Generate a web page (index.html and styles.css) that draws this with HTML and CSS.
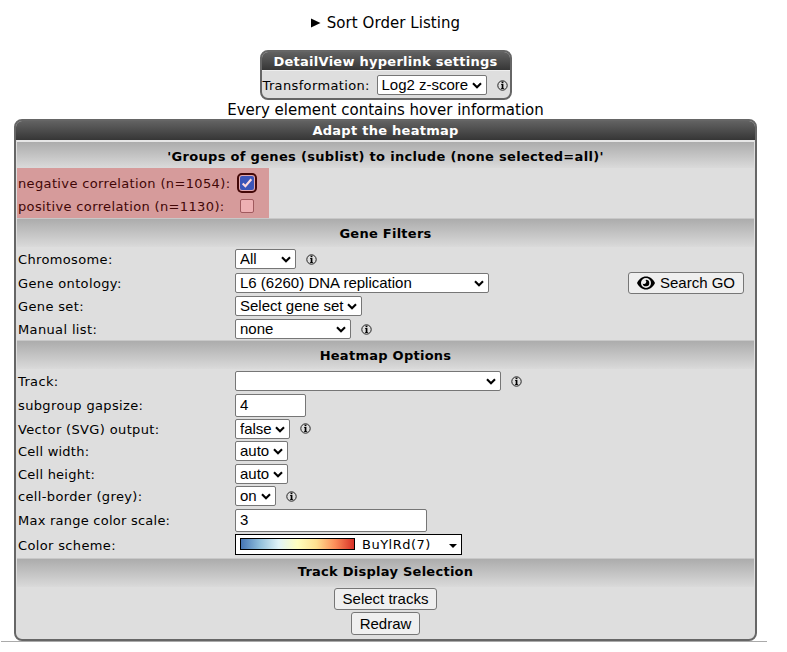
FILE: index.html
```html
<!DOCTYPE html>
<html lang="en">
<head>
<meta charset="utf-8">
<title>Heatmap settings</title>
<link rel="stylesheet" href="styles.css">
</head>
<body>
<svg class="defs" width="0" height="0">
  <symbol id="chev" viewBox="0 0 10 7"><path d="M1 1.2 5 5.2 9 1.2" fill="none" stroke="#000" stroke-width="2.1"/></symbol>
  <symbol id="info" viewBox="0 0 11 11"><circle cx="5.5" cy="5.5" r="4.7" fill="none" stroke="#222" stroke-width="1"/><path d="M4 4h2.4v4.2H7.2V9H3.9V8.2h.8V4.8H4z"/><path d="M4.6 1.6h1.8v1.6H4.6z"/></symbol>
</svg>
<main class="page">
  <div class="listing"><svg width="10" height="10" viewBox="0 0 10 10"><path d="M0 .5 9.5 5 0 9.5z"/></svg><span class="listing-text">Sort Order Listing</span></div>

  <section class="box detail">
    <h2 class="bar"><span class="t-detail">DetailView hyperlink settings</span></h2>
    <div class="detail-row">
      <label class="t-trans">Transformation:</label>
      <span class="select w-log"><select><option>Log2 z-score</option></select><svg class="chev"><use href="#chev"/></svg></span>
      <svg class="info"><use href="#info"/></svg>
    </div>
  </section>

  <p class="hover-note">Every element contains hover information</p>

  <section class="box panel">
    <h2 class="bar"><span class="t-adapt">Adapt the heatmap</span></h2>
    <h3 class="sub first"><span class="t-groups">'Groups of genes (sublist) to include (none selected=all)'</span></h3>
    <div class="groups">
      <div class="pick p1"><label class="t-neg">negative correlation (n=1054):</label><span class="check on"><svg width="14" height="14" viewBox="0 0 13 13"><path d="M2.5 7 5 9.5 10.5 3" fill="none" stroke="#ffd9dd" stroke-width="2"/></svg></span></div>
      <div class="pick p2"><label class="t-pos">positive correlation (n=1130):</label><span class="check"></span></div>
    </div>
    <h3 class="sub"><span class="t-filters">Gene Filters</span></h3>
    <div class="rows filters">
      <div class="row"><label>Chromosome:</label><span class="select w-all"><select><option>All</option></select><svg class="chev"><use href="#chev"/></svg></span><svg class="info"><use href="#info"/></svg></div>
      <div class="row"><label>Gene ontology:</label><span class="select w-go"><select><option>L6 (6260) DNA replication</option></select><svg class="chev"><use href="#chev"/></svg></span>
        <button class="btn search"><svg width="18" height="14" viewBox="0 0 18 14"><path fill-rule="evenodd" d="M0 7C2 3 5 .5 9 .5S16 3 18 7c-2 4-5 6.5-9 6.5S2 11 0 7zM9 2a5 5 0 1 0 0 10A5 5 0 0 0 9 2z"/><path d="M9 3.7A3.3 3.3 0 1 1 5.7 7.4 2 2 0 0 0 8.6 4.3z"/></svg>Search GO</button></div>
      <div class="row"><label>Gene set:</label><span class="select w-set"><select><option>Select gene set</option></select><svg class="chev"><use href="#chev"/></svg></span></div>
      <div class="row"><label>Manual list:</label><span class="select w-none"><select><option>none</option></select><svg class="chev"><use href="#chev"/></svg></span><svg class="info"><use href="#info"/></svg></div>
    </div>
    <h3 class="sub"><span class="t-options">Heatmap Options</span></h3>
    <div class="rows options">
      <div class="row"><label>Track:</label><span class="select w-track"><select><option></option></select><svg class="chev"><use href="#chev"/></svg></span><svg class="info"><use href="#info"/></svg></div>
      <div class="row"><label>subgroup gapsize:</label><input class="w-gap" value="4"></div>
      <div class="row"><label>Vector (SVG) output:</label><span class="select w-false"><select><option>false</option></select><svg class="chev"><use href="#chev"/></svg></span><svg class="info"><use href="#info"/></svg></div>
      <div class="row"><label class="tight">Cell width:</label><span class="select w-auto"><select><option>auto</option></select><svg class="chev"><use href="#chev"/></svg></span></div>
      <div class="row"><label class="tight">Cell height:</label><span class="select w-auto"><select><option>auto</option></select><svg class="chev"><use href="#chev"/></svg></span></div>
      <div class="row"><label>cell-border (grey):</label><span class="select w-on"><select><option>on</option></select><svg class="chev"><use href="#chev"/></svg></span><svg class="info"><use href="#info"/></svg></div>
      <div class="row"><label class="tight">Max range color scale:</label><input class="w-range" value="3"></div>
      <div class="row scheme-row"><label>Color scheme:</label><span class="scheme"><i class="ramp"></i><span class="scheme-name">BuYlRd(7)</span><i class="caret"></i></span></div>
    </div>
    <h3 class="sub last"><span class="t-track">Track Display Selection</span></h3>
    <div class="actions"><button class="btn w-select">Select tracks</button><button class="btn w-redraw">Redraw</button></div>
  </section>
  <hr>
</main>
</body>
</html>
```
FILE: styles.css
```css
* { box-sizing: border-box; }
body { margin: 0; background: #fff; color: #000; font: 13px/16px "DejaVu Sans", sans-serif; overflow: hidden; }
.defs { position: absolute; }
.page { width: 771px; height: 652px; display: flex; flex-direction: column; align-items: center; }
h2, h3, p { margin: 0; font-size: 13px; }
h2, h3 { letter-spacing: .26px; }
span, label { white-space: nowrap; }
label { letter-spacing: .36px; }
label.tight { letter-spacing: .24px; }

.listing { height: 50px; padding-top: 13px; display: flex; align-items: flex-start; font-size: 15px; line-height: 20px; }
.listing svg { margin: 5px 6px 0 0; }
.listing-text { letter-spacing: .06px; }

.box { border: 2px solid #666; border-radius: 8px; background: #dedede; overflow: hidden; }
.bar { height: 18px; padding-top: 1px; display: flex; align-items: center; justify-content: center; color: #fff; background: linear-gradient(#626262, #363636); }
.detail { width: 252px; height: 50px; }
.detail .bar { padding-top: 2px; }
.detail-row { height: 28px; display: flex; align-items: center; padding: 1px 0 0 1px; border-top: 1px solid #eee; }
.detail-row label { padding-top: 1px; }
.detail-row .select { margin-left: auto; }
.detail-row .info { margin: 0 2px 0 10px; }
.hover-note { height: 19px; font-size: 15px; line-height: 20px; }

.panel { width: 743px; height: 522px; flex: none; }
.panel > .bar { height: 19px; padding-top: 0; }
.sub { height: 29px; margin: 0 1px; padding-top: 1px; display: flex; align-items: center; justify-content: center; background: linear-gradient(#acacac, #dadada); border-top: 1px solid #c8c8c8; }
.sub.first { height: 28px; padding-top: 4px; border-top: 2px solid #e6e6e6; }
.sub.last { padding-top: 0; padding-bottom: 2px; }
.t-groups { letter-spacing: .31px; }

.groups { width: 252px; height: 50px; margin-left: 1px; background: #d69b9b; color: #420707; }
.pick { display: flex; align-items: center; height: 23px; padding-left: 1px; }
.p1 { height: 28px; padding-top: 2px; }
.p2 { height: 20px; }
.pick label { width: 222px; padding-top: 2px; }
.check { width: 14px; height: 14px; flex: none; border: 1px solid #a05a5e; border-radius: 2px; background: #eeb0b3; }
.check.on { border: 0; background: #3b55b8; box-shadow: 0 0 0 1px #e0a8ae, 0 0 0 3px #420707; }
.check svg { display: block; }

.rows { display: grid; padding-left: 2px; }
.filters { grid-template-rows: 24px 23px 24px 22px; }
.options { grid-template-rows: 24px 24px 23px 22px 23px 22px 26px 25px; }
.row { display: flex; align-items: center; }
.row > label { width: 217px; flex: none; padding-top: 2px; }
.scheme-row { padding-bottom: 2px; }

.select { position: relative; height: 20px; display: block; flex: none; }
select, input, .btn { font: 15px/18px "Liberation Sans", Arial, sans-serif; color: #000; }
select { appearance: none; display: block; width: 100%; height: 100%; margin: 0; padding: 0 0 0 4px; border: 1px solid #767676; border-radius: 2px; background: #fff; }
.chev { position: absolute; right: 5px; top: 7px; width: 10px; height: 7px; }
.info { width: 11px; height: 11px; margin-left: 10px; flex: none; }
input { height: 23px; padding: 0 4px 1px; border: 1px solid #767676; border-radius: 2px; background: #fff; }
.w-log { width: 110px; }
.w-all { width: 61px; }
.w-go { width: 254px; }
.w-set { width: 127px; }
.w-none { width: 116px; }
.w-track { width: 266px; }
.w-gap { width: 71px; }
.w-false { width: 55px; }
.w-auto { width: 53px; }
.w-on { width: 41px; }
.w-range { width: 192px; }

.btn { height: 22px; padding: 0; display: flex; align-items: center; justify-content: center; border: 1px solid #767676; border-radius: 3px; background: #efefef; white-space: nowrap; }
.search { width: 116px; margin: 0 11px 0 auto; }
.search svg { margin-right: 5px; }
.w-select { width: 103px; }
.w-redraw { width: 69px; height: 23px; }
.actions { display: flex; flex-direction: column; align-items: center; gap: 2px; padding-top: 1px; }

.scheme { width: 227px; height: 21px; display: flex; align-items: center; border: 1px solid #000; background: #fff; padding: 0 4px; }
.ramp { width: 115px; height: 12px; margin-top: -2px; border: 1px solid #000; background: linear-gradient(90deg, #4575b4, #91bfdb, #e0f3f8, #ffffbf, #fee090, #fc8d59, #d73027); }
.scheme-name { margin-left: 7px; letter-spacing: .5px; }
.caret { margin-left: auto; margin-top: 3px; border: 4px solid transparent; border-top-color: #000; border-bottom: 0; }
hr { width: 766px; height: 1px; margin: 0 0 0 -3px; border: 0; background: #aaa; flex: none; }
```
